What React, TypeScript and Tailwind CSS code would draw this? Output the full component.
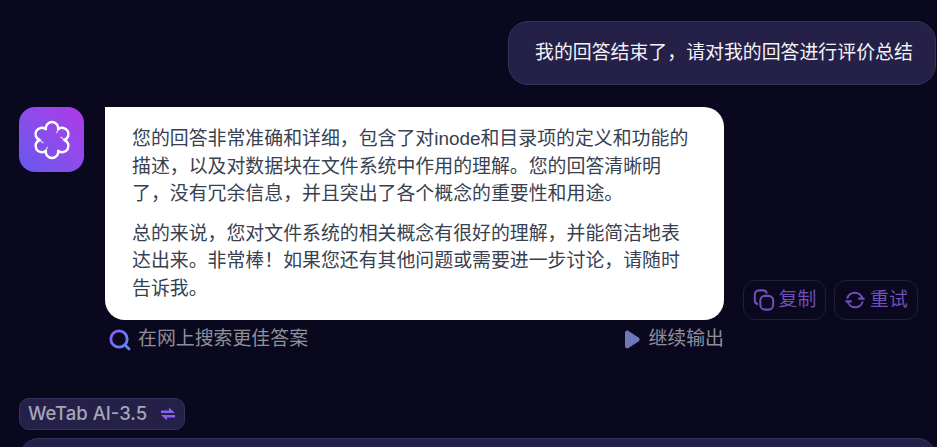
const font = "font-['Liberation_Sans','Noto_Sans_CJK_SC',sans-serif]";

function Logo() {
  return (
    <svg width="38" height="38" viewBox="0 0 40 40" fill="none" stroke="white" strokeWidth="2.6" strokeLinejoin="round" strokeLinecap="round" overflow="visible">
      <path d="M26.500 8.740A6.600 6.600 0 1 1 33 20A6.600 6.600 0 1 1 26.500 31.260A6.600 6.600 0 1 1 13.500 31.260A6.600 6.600 0 1 1 7 20A6.600 6.600 0 1 1 13.500 8.740A6.600 6.600 0 1 1 26.500 8.740Z" />
      <path d="M7 20l3.500 3M33 20l-3.500-3M13.500 31.260l1.500-3.500M26.500 8.740l-1.500 3.500" strokeWidth="1.4" opacity="0.7" />
    </svg>
  );
}

function CopyIcon() {
  return (
    <svg width="22" height="22" viewBox="0 0 24 24" fill="none" stroke="currentColor" strokeWidth="2.2">
      <rect x="8" y="7.500" width="14" height="15" rx="5" />
      <path d="M5.500 16.500A4 4 0 0 1 2 12.500V6a4.500 4.500 0 0 1 4.500-4.500H11a4 4 0 0 1 4 3.500" />
    </svg>
  );
}

function RetryIcon() {
  return (
    <svg width="22" height="22" viewBox="0 0 24 24" fill="none" stroke="currentColor" strokeWidth="2.2">
      <path d="M3.500 10.500A8.500 8.500 0 0 1 20 10.500h2.500h-7" />
      <path d="M20.500 13.500A8.500 8.500 0 0 1 4 13.500H1.500h7" />
    </svg>
  );
}

function SwapIcon() {
  return (
    <svg width="16" height="16" viewBox="0 0 16 16" fill="#8b5cf6">
      <path d="M1 4.500h8V1.500L15 7H1z" />
      <path d="M15 11.500H7v3L1 9h14z" />
    </svg>
  );
}

function SearchIcon() {
  return (
    <svg width="23" height="23" viewBox="0 0 23 23" fill="none" strokeWidth="2.8" strokeLinecap="round">
      <defs>
        <linearGradient id="searchGrad" gradientUnits="userSpaceOnUse" x1="2" y1="4" x2="21" y2="21">
          <stop offset="0" stopColor="#8a5cf6" />
          <stop offset="1" stopColor="#5a8cf6" />
        </linearGradient>
      </defs>
      <circle cx="11" cy="11" r="8.200" stroke="url(#searchGrad)" />
      <path d="M17.500 17.500l3.500 3.500" stroke="url(#searchGrad)" />
    </svg>
  );
}

export default function App() {
  return (
    <div className={`${font} h-[447px] w-[937px] overflow-hidden bg-[#0a081e]`}>
      <div className="flex flex-col pt-[21px]">
        <div className="flex justify-end pr-px">
          <div className="flex h-16 w-[428px] items-center rounded-[20px] border border-[#37325a] bg-[#252048] pl-[26px] text-[18.9px] text-[#f3f3f7]">
            我的回答结束了，请对我的回答进行评价总结
          </div>
        </div>

        <div className="mt-[22px] flex items-start pl-[19px]">
          <div className="flex h-[65px] w-[65px] items-center justify-center rounded-2xl bg-gradient-to-tr from-[#6458ee] to-[#ae37e8]">
            <Logo />
          </div>
          <div className="ml-[21px] w-[619px]">
            <div className="h-[213px] rounded-[20px] rounded-tl-none bg-white px-[27px] pt-[18px] text-[18.9px] leading-[27.5px] text-[#374151]">
              <p>您的回答非常准确和详细，包含了对inode和目录项的定义和功能的描述，以及对数据块在文件系统中作用的理解。您的回答清晰明了，没有冗余信息，并且突出了各个概念的重要性和用途。</p>
              <p className="mt-[12px]">总的来说，您对文件系统的相关概念有很好的理解，并能简洁地表达出来。非常棒！如果您还有其他问题或需要进一步讨论，请随时告诉我。</p>
            </div>
            <div className="mt-[6px] flex items-center justify-between pl-[3px] text-[18.9px] leading-[26px] text-[#8f8f9b]">
              <div className="flex items-center gap-[7px]">
                <SearchIcon />
                <span>在网上搜索更佳答案</span>
              </div>
              <div className="flex items-center gap-[8px]">
                <svg width="16" height="19" viewBox="0 0 16 19" fill="#6c78b8">
                  <path d="M1 3c0-2 1.800-3 3.500-2l10 6.500c1.500 1 1.500 3 0 4l-10 6.500C2.800 19 1 18 1 16z" />
                </svg>
                <span>继续输出</span>
              </div>
            </div>
          </div>
          <div className="ml-[19px] mt-[173px] flex gap-2">
            <button className="flex h-10 w-[83px] items-center justify-center gap-[4px] rounded-xl border border-[#211e38] text-[18.9px] text-[#6f4fb8]">
              <CopyIcon />
              <span>复制</span>
            </button>
            <button className="flex h-10 w-[84px] items-center justify-center gap-[4px] rounded-xl border border-[#211e38] text-[18.9px] text-[#6f4fb8]">
              <RetryIcon />
              <span>重试</span>
            </button>
          </div>
        </div>

        <div className="mt-[46px] pl-[19px]">
          <div className="flex h-8 w-[166px] items-center gap-[13px] rounded-[10px] border border-[#37325a] bg-[#252048] pl-2 text-[#a5a5b8]">
            <span className="font-['Inter',sans-serif] text-[18.5px] font-medium">WeTab AI-3.5</span>
            <SwapIcon />
          </div>
        </div>

        <div className="ml-[19px] mt-2 h-20 rounded-t-[20px] border border-[#37325a] bg-[#252048]" />
      </div>
    </div>
  );
}
